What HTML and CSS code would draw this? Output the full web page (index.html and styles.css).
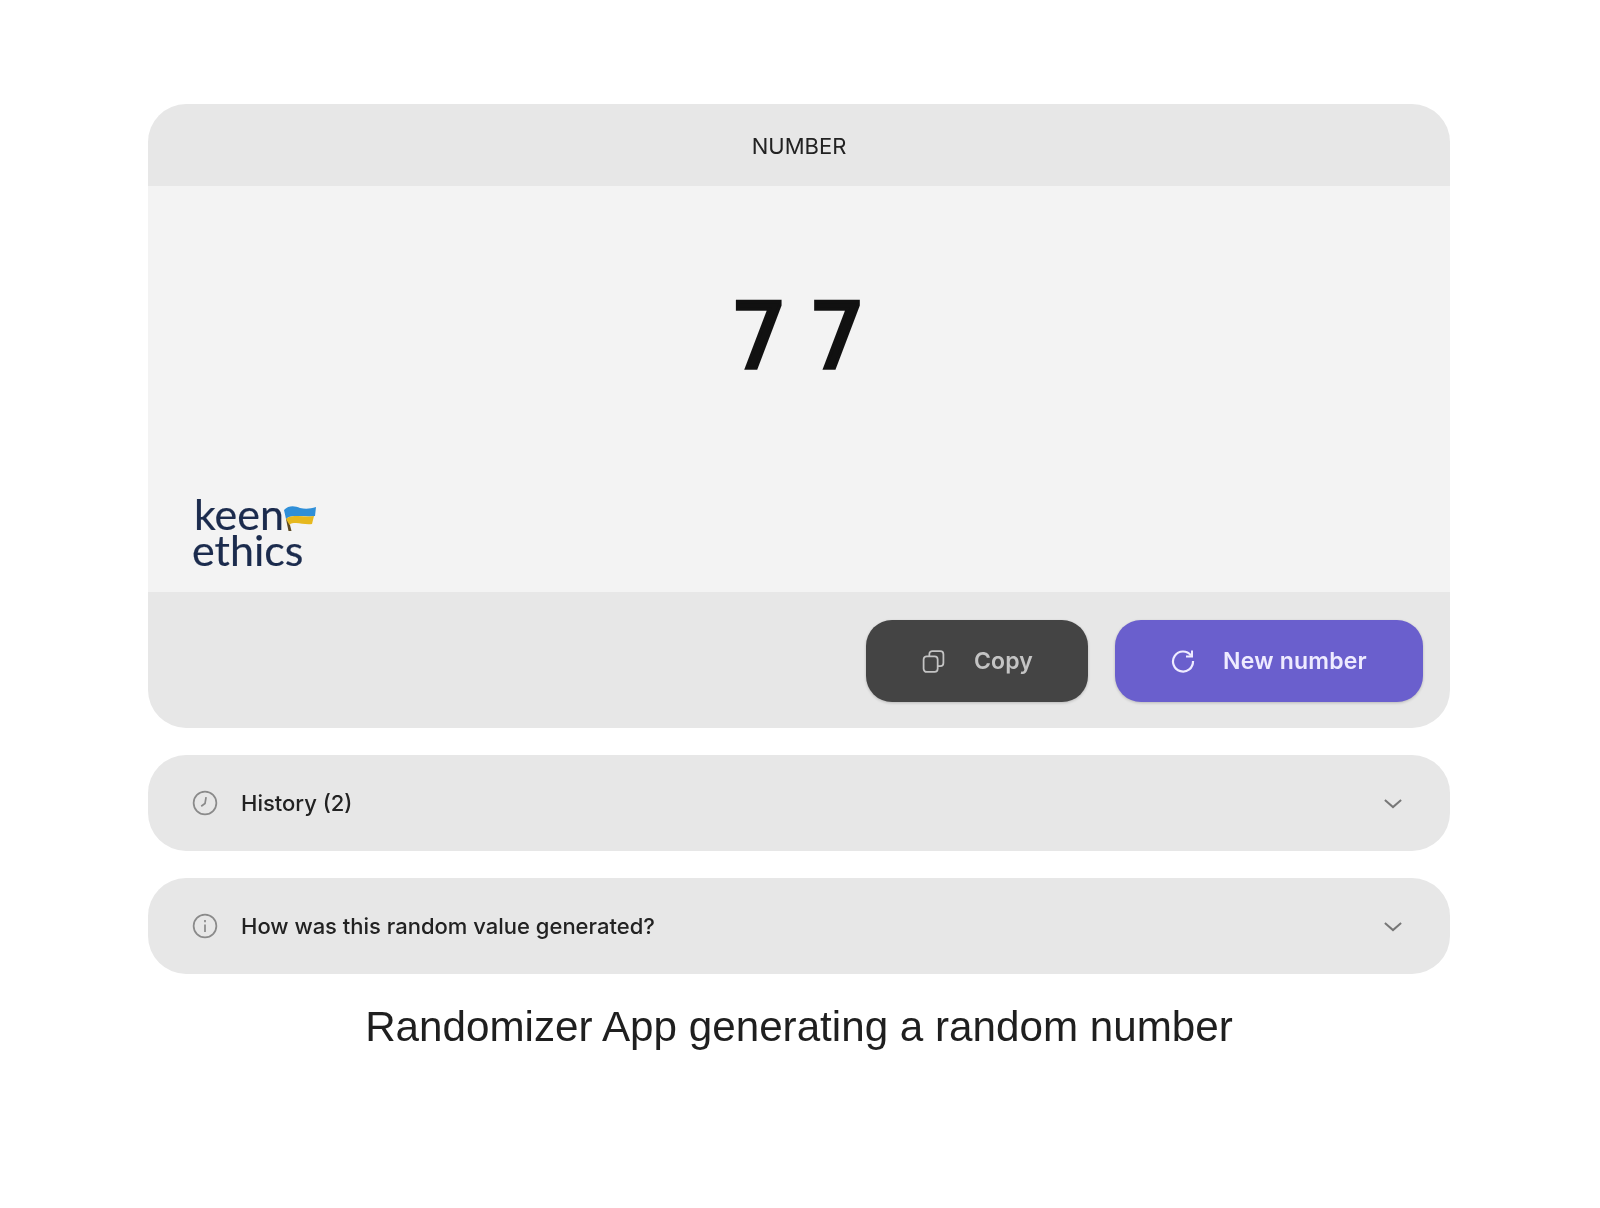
FILE: index.html
```html
<!DOCTYPE html>
<html lang="en">
<head>
    <meta charset="UTF-8">
    <meta name="viewport" content="width=device-width, initial-scale=1.0">
    <title>Randomizer App</title>
    <link rel="stylesheet" href="styles.css">
</head>
<body>

    <div class="page">
        <div class="card">
            <div class="card-header">NUMBER</div>
            <div class="card-body">
                <div class="number">77</div>
                <div class="logo">
                    <div class="logo-line logo-keen">keen<svg class="flag" viewBox="0 0 32 26" width="32" height="26">
                        <path d="M3 13L6 20L7.5 26L4.5 26L2 14Z" fill="#5d4a24"/>
                        <path d="M0 5C5 0 11 1 16 3C21 4 26 4 32 2L31 11C25 12 19 11 14 11C9 11 5 11 2 14Z" fill="#2f8fd8"/>
                        <path d="M2 14C5 11 9 11 14 11C19 11 25 12 30 11L28 19C22 20 17 18 12 18C9 18 7 18 5.5 20Z" fill="#e6b81e"/>
                    </svg></div>
                    <div class="logo-line">ethics</div>
                </div>
            </div>
            <div class="card-footer">
                <button class="btn btn-copy">
                    <svg viewBox="0 0 24 24" width="25" height="25" fill="none" stroke="currentColor" stroke-width="1.7">
                        <rect x="2.5" y="7" width="13.5" height="15" rx="3"/>
                        <path d="M8 7V5C8 3.2 9.2 2 11 2H18.5C20.3 2 21.5 3.2 21.5 5V13.5C21.5 15.3 20.3 16.5 18.5 16.5H16"/>
                    </svg>
                    Copy
                </button>
                <button class="btn btn-new">
                    <svg viewBox="0 0 24 24" width="24" height="24" fill="none" stroke="currentColor" stroke-width="2.2">
                        <path d="M20 6.5A10 10 0 1 0 22 12"/>
                        <path d="M21 1.5V7.5H15" stroke-width="2"/>
                    </svg>
                    New number
                </button>
            </div>
        </div>

        <div class="row">
            <svg class="row-icon" viewBox="0 0 24 24" width="26" height="26" fill="none" stroke="currentColor" stroke-width="1.6">
                <circle cx="12" cy="12" r="10.5"/>
                <path d="M13 6.5L12 12.5L8.5 15"/>
            </svg>
            <span class="row-label">History (2)</span>
            <svg class="chevron" viewBox="0 0 20 12" width="18" height="11" fill="none" stroke="currentColor" stroke-width="2.2">
                <path d="M1 2L10 10L19 2"/>
            </svg>
        </div>

        <div class="row">
            <svg class="row-icon" viewBox="0 0 24 24" width="26" height="26" fill="none" stroke="currentColor" stroke-width="1.6">
                <circle cx="12" cy="12" r="10.5"/>
                <path d="M12 10.5V17.5"/>
                <path d="M12 6.5V8.5"/>
            </svg>
            <span class="row-label">How was this random value generated?</span>
            <svg class="chevron" viewBox="0 0 20 12" width="18" height="11" fill="none" stroke="currentColor" stroke-width="2.2">
                <path d="M1 2L10 10L19 2"/>
            </svg>
        </div>

        <p class="caption">Randomizer App generating a random number</p>
    </div>

</body>
</html>
```

FILE: styles.css
```css
body {
    margin: 0;
    background: #ffffff;
    font-family: 'Inter', sans-serif;
    color: #1a1a1a;
}
/* the source picture is a soft upscale */
.page {
    padding: 104px 150px 0 148px;
    filter: blur(0.7px);
}
.card {
    border-radius: 38px;
    overflow: hidden;
    background: #e7e7e7;
}
.card-header {
    height: 82px;
    padding-top: 1px;
    box-sizing: border-box;
    display: flex;
    align-items: center;
    justify-content: center;
    font-size: 22px;
    color: #222;
}
.card-body {
    height: 406px;
    background: #f3f3f3;
    display: flex;
    flex-direction: column;
}
.number {
    margin-top: 90px;
    padding-left: 19px;
    text-align: center;
    font-family: 'DejaVu Sans', sans-serif;
    font-size: 90px;
    line-height: 121px;
    letter-spacing: 21px;
    -webkit-text-stroke: 3.5px #111;
    color: #111;
}
.logo {
    margin-top: auto;
    padding: 0 0 24px 44px;
    font-family: 'Lato', sans-serif;
    font-size: 43px;
    line-height: 36px;
    -webkit-text-stroke: 0.2px #1b2b4d;
    color: #1b2b4d;
}
.logo-line {
    display: flex;
    align-items: flex-end;
}
.logo-keen {
    padding-left: 2px;
}
.flag {
    margin: 0 0 1px 0;
}
.card-footer {
    height: 136px;
    box-sizing: border-box;
    padding: 28px 27px 0 0;
    display: flex;
    justify-content: flex-end;
    gap: 27px;
}
.btn {
    height: 82px;
    border: none;
    border-radius: 26px;
    display: flex;
    align-items: center;
    justify-content: center;
    gap: 28px;
    font-family: 'Inter', sans-serif;
    font-size: 23px;
    font-weight: 600;
    letter-spacing: 0.2px;
    box-shadow: 0 1px 3px rgba(0, 0, 0, 0.2);
}
.btn-copy {
    width: 222px;
    background: #444444;
    color: #c4c4c4;
}
.btn-new {
    width: 308px;
    background: #6a5fcd;
    color: #eeebff;
}
.row {
    height: 96px;
    margin-top: 27px;
    padding: 0 48px 0 44px;
    border-radius: 38px;
    background: #e7e7e7;
    display: flex;
    align-items: center;
}
.row-icon {
    color: #8a8a8a;
    margin-right: 23px;
}
.row-label {
    flex: 1;
    font-size: 22px;
    font-weight: 500;
    color: #222;
}
.chevron {
    color: #777;
}
.caption {
    margin: 28px 0 0;
    text-align: center;
    font-family: 'Liberation Sans', Arial, sans-serif;
    font-size: 42.2px;
    line-height: 50px;
    color: #1f1f1f;
}
```
